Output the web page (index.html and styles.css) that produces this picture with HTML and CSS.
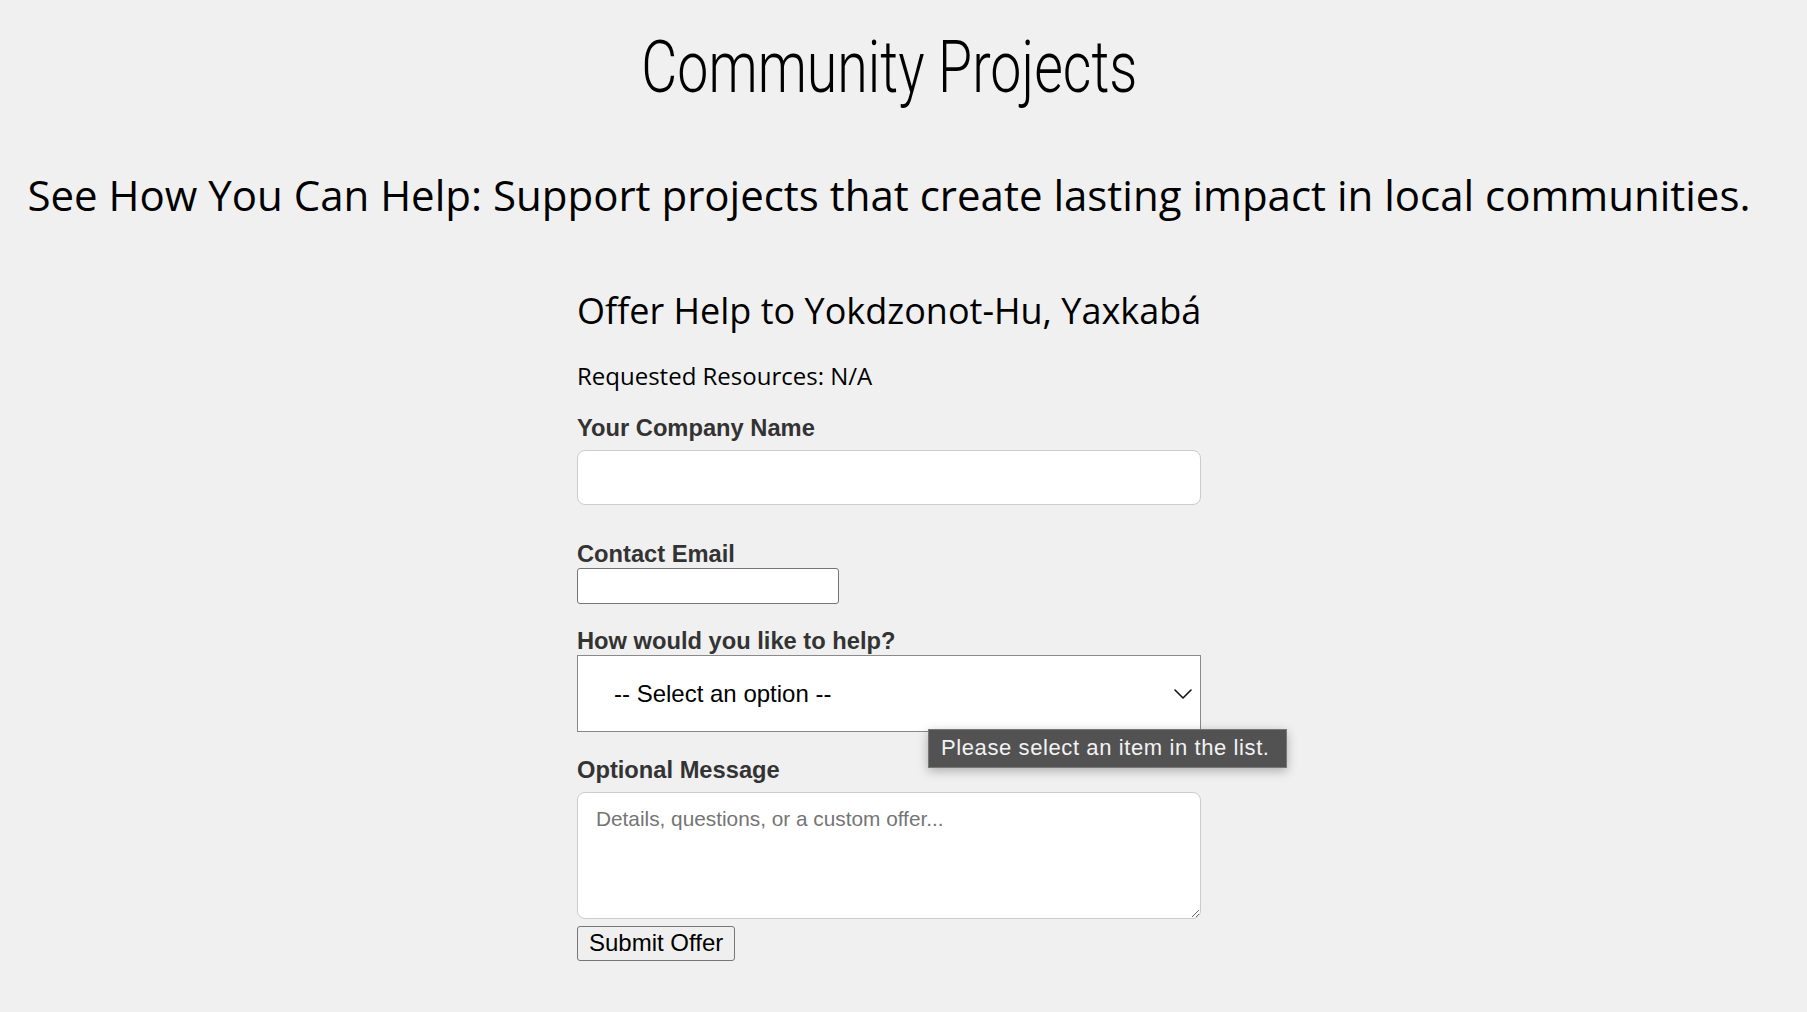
FILE: index.html
```html
<!DOCTYPE html>
<html lang="en">
<head>
<meta charset="utf-8">
<title>Community Projects</title>
<link rel="stylesheet" href="styles.css">
</head>
<body>
<div class="page">
  <header class="masthead">
    <h1 class="title"><span class="title-text">Community Projects</span></h1>
    <h2 class="subtitle">See How You Can Help: Support projects that create lasting impact in local communities.</h2>
  </header>
  <form class="offer-form" onsubmit="return false;">
    <h3 class="form-heading">Offer Help to Yokdzonot-Hu, Yaxkabá</h3>
    <p class="resources">Requested Resources: N/A</p>

    <label class="field-label label-first" for="company">Your Company Name</label>
    <input class="text-input" id="company" type="text">

    <label class="field-label label-email" for="email">Contact Email</label>
    <input class="email-input" id="email" type="email">

    <label class="field-label label-gap" for="help">How would you like to help?</label>
    <div class="select-wrap">
      <select class="help-select" id="help">
        <option>-- Select an option --</option>
      </select>
      <svg class="chevron" width="18" height="10" viewBox="0 0 18 10" aria-hidden="true">
        <path d="M1 1 L9 9 L17 1" fill="none" stroke="#111" stroke-width="1.6" stroke-linecap="round" stroke-linejoin="round"/>
      </svg>
      <div class="tooltip">Please select an item in the list.</div>
    </div>

    <label class="field-label label-gap" for="message">Optional Message</label>
    <textarea class="message" id="message" placeholder="Details, questions, or a custom offer..."></textarea>

    <button class="submit" type="submit">Submit Offer</button>
  </form>
</div>
</body>
</html>
```

FILE: styles.css
```css
html, body {
  margin: 0;
  padding: 0;
  background: #f0f0f0;
}

.page {
  padding-right: 29px;
  color: #000;
}

.masthead {
  text-align: center;
}

.title {
  margin: 24px 0 0;
  font-family: Roboto, "Liberation Sans", sans-serif;
  font-weight: 300;
  font-size: 73px;
  line-height: normal;
  color: #000;
}

.title-text {
  display: inline-block;
  transform: scaleX(0.76);
  transform-origin: center;
}

.subtitle {
  margin: 55.5px 0 0;
  font-family: "Open Sans", "Liberation Sans", sans-serif;
  font-weight: 400;
  font-size: 42px;
  line-height: normal;
  white-space: nowrap;
}

.offer-form {
  width: 624px;
  margin: 63.8px auto 0;
  display: flex;
  flex-direction: column;
  align-items: flex-start;
}

.form-heading {
  margin: 0;
  font-family: "Open Sans", "Liberation Sans", sans-serif;
  font-weight: 400;
  font-size: 36px;
  line-height: normal;
  white-space: nowrap;
}

.resources {
  margin: 24px 0 0;
  font-family: "Open Sans", "Liberation Sans", sans-serif;
  font-size: 24px;
  line-height: normal;
}

.field-label {
  display: block;
  font-family: "Liberation Sans", Arial, sans-serif;
  font-weight: 700;
  font-size: 23.7px;
  line-height: normal;
  color: #333;
}

.label-first { margin-top: 22.5px; }
.label-email { margin-top: 36px; }
.label-gap { margin-top: 24.5px; }

.text-input {
  box-sizing: border-box;
  width: 624px;
  height: 55px;
  margin: 8px 0 0;
  border: 1px solid #cccccc;
  border-radius: 8px;
  background: #fff;
  font-family: "Liberation Sans", Arial, sans-serif;
  font-size: 20px;
  padding: 0 16px;
}

.email-input {
  box-sizing: border-box;
  width: 262px;
  height: 36px;
  margin: 0;
  border: 1px solid #767676;
  border-radius: 3px;
  background: #fff;
  font-family: "Liberation Sans", Arial, sans-serif;
  font-size: 20px;
  padding: 0 6px;
}

.select-wrap {
  position: relative;
  width: 624px;
  height: 77px;
}

.help-select {
  box-sizing: border-box;
  width: 624px;
  height: 77px;
  margin: 0;
  padding: 0 40px 0 36px;
  border: 1px solid #8a8a8a;
  border-radius: 0;
  background: #fff;
  color: #000;
  font-family: "Liberation Sans", Arial, sans-serif;
  font-size: 24px;
  -webkit-appearance: none;
  appearance: none;
}

.chevron {
  position: absolute;
  right: 9px;
  top: 34px;
  pointer-events: none;
}

.tooltip {
  position: absolute;
  left: 351px;
  top: 74px;
  box-sizing: border-box;
  width: 359px;
  height: 39px;
  padding: 0 0 0 12px;
  background: #525252;
  border: 1px solid #777;
  color: #f2f2f2;
  font-family: "Liberation Sans", Arial, sans-serif;
  font-size: 22px;
  letter-spacing: 0.6px;
  line-height: 36px;
  white-space: nowrap;
  box-shadow: 0 3px 10px rgba(0, 0, 0, 0.28);
  z-index: 2;
}

.message {
  box-sizing: border-box;
  width: 624px;
  height: 127px;
  margin: 8px 0 0;
  padding: 14px 18px;
  border: 1px solid #cccccc;
  border-radius: 8px;
  background: #fff;
  font-family: "Liberation Sans", Arial, sans-serif;
  font-size: 20.8px;
  resize: vertical;
}

.message::placeholder {
  color: #757575;
}

.submit {
  margin-top: 7px;
  height: 35px;
  padding: 0 11px;
  border: 1px solid #767676;
  border-radius: 3px;
  background: #efefef;
  color: #000;
  font-family: "Liberation Sans", Arial, sans-serif;
  font-size: 24px;
  line-height: 1;
}
```
